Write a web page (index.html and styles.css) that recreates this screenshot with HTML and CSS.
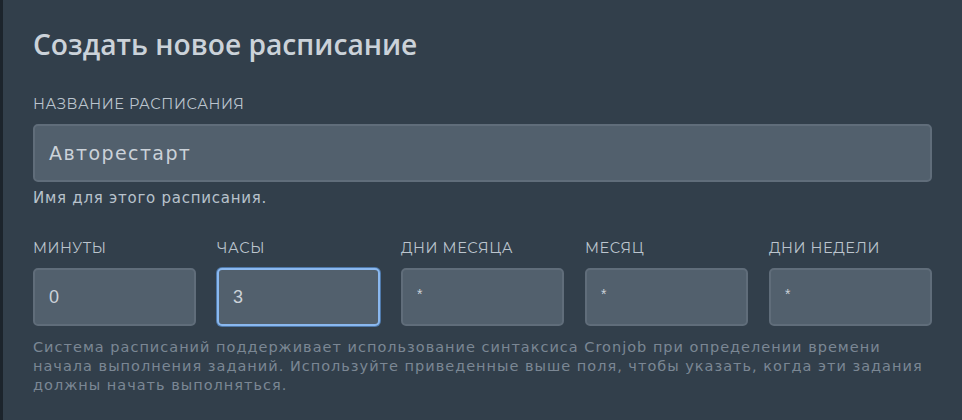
FILE: index.html
```html
<!DOCTYPE html>
<html lang="ru">
<head>
<meta charset="utf-8">
<link rel="stylesheet" href="styles.css">
</head>
<body>
<div class="strip"></div>
<main class="panel">
  <h1 class="title">Создать новое расписание</h1>
  <div class="field">
    <label class="label">Название расписания</label>
    <div class="input input-wide"><span class="val-name">Авторестарт</span></div>
    <p class="help">Имя для этого расписания.</p>
  </div>
  <div class="cron">
    <div class="cron-item">
      <label class="label">Минуты</label>
      <div class="input"><span class="val">0</span></div>
    </div>
    <div class="cron-item">
      <label class="label">Часы</label>
      <div class="input focused"><span class="val">3</span></div>
    </div>
    <div class="cron-item">
      <label class="label">Дни месяца</label>
      <div class="input"><span class="val star">*</span></div>
    </div>
    <div class="cron-item">
      <label class="label">Месяц</label>
      <div class="input"><span class="val star">*</span></div>
    </div>
    <div class="cron-item">
      <label class="label">Дни недели</label>
      <div class="input"><span class="val star">*</span></div>
    </div>
  </div>
  <p class="note">Система расписаний поддерживает использование синтаксиса Cronjob при определении времени<br>начала выполнения заданий. Используйте приведенные выше поля, чтобы указать, когда эти задания<br>должны начать выполняться.</p>
</main>
</body>
</html>
```
FILE: styles.css
```css
html, body {
  margin: 0;
  padding: 0;
  height: 100%;
  overflow: hidden;
}
body {
  background: #323f4b;
  display: flex;
}
.strip {
  width: 3px;
  flex: none;
  background: #1c242c;
}
.panel {
  flex: 1;
  padding: 26px 30px 0 30px;
  box-sizing: border-box;
  width: 959px;
}
.title {
  margin: 0;
  font-family: "Open Sans", sans-serif;
  font-weight: 600;
  font-size: 28.2px;
  line-height: 36px;
  color: #cbd2d9;
}
.field {
  margin-top: 34px;
}
.label {
  display: block;
  font-family: "Montserrat", "Lato", sans-serif;
  text-transform: uppercase;
  font-size: 14.5px;
  line-height: 16px;
  letter-spacing: 0.6px;
  color: #bcc5ce;
  margin-bottom: 12px;
}
.input {
  box-sizing: border-box;
  height: 58px;
  background: #52606d;
  border: 2px solid #606d7a;
  border-radius: 5px;
  display: flex;
  align-items: center;
  padding-left: 14px;
}
.val-name {
  font-family: "DejaVu Sans", sans-serif;
  font-size: 19px;
  color: #cbd2d9;
  letter-spacing: 1.4px;
}
.val {
  font-family: "Liberation Sans", Arial, sans-serif;
  font-size: 18px;
  color: #cbd2d9;
}
.val.star {
  font-size: 14px;
  margin-top: -6px;
}
.focused {
  border-color: #8ab8ef;
  box-shadow: 0 0 0 1px #4f79aa;
}
.help {
  margin: 7px 0 0 0;
  font-family: "DejaVu Sans", sans-serif;
  font-size: 15px;
  line-height: 18px;
  letter-spacing: 0.75px;
  color: #b8c2cc;
}
.cron {
  margin-top: 33px;
  display: grid;
  grid-template-columns: repeat(5, 1fr);
  gap: 21px;
}
.cron .label {
  margin-bottom: 12px;
}
.note {
  margin: 12px 0 0 0;
  font-family: "DejaVu Sans", sans-serif;
  font-size: 14.5px;
  line-height: 19px;
  letter-spacing: 1px;
  white-space: nowrap;
  color: #7b8794;
}
```
